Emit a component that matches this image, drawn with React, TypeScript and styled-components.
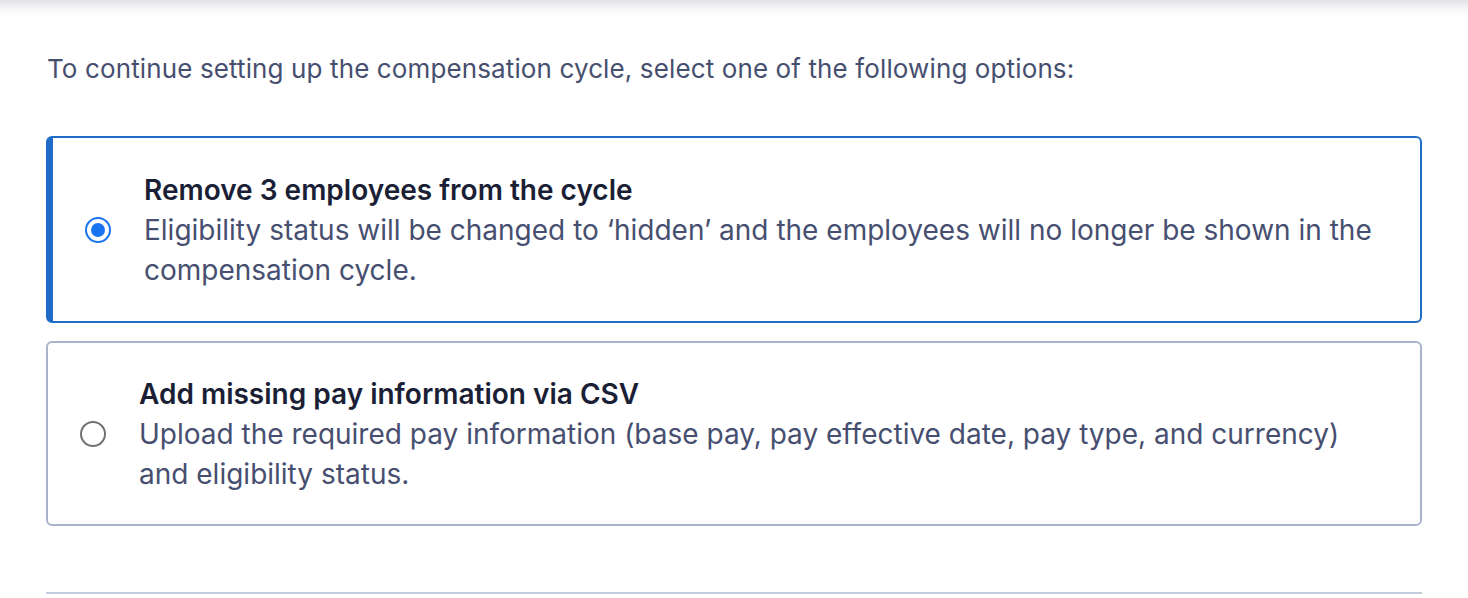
import React, { useState } from "react";
import styled, { createGlobalStyle } from "styled-components";

const GlobalStyle = createGlobalStyle`
  html, body { margin: 0; padding: 0; background: #ffffff; }
  body { font-family: Inter, "Noto Sans", sans-serif; -webkit-font-smoothing: antialiased; }
  * { box-sizing: border-box; }
`;

const Page = styled.div`
  position: relative;
  width: 1468px;
  height: 598px;
  overflow: hidden;
  background: #ffffff;
`;

const TopShadow = styled.div`
  height: 16px;
  margin-bottom: -16px;
  background: linear-gradient(to bottom, rgba(40, 44, 70, 0.14), rgba(40, 44, 70, 0.05) 50%, rgba(40, 44, 70, 0));
`;

const Content = styled.div`
  padding: 49px 46px 0 46px;
  display: flex;
  flex-direction: column;
`;

const Intro = styled.p`
  margin: 0 0 47px 0;
  font-size: 26px;
  line-height: 40px;
  letter-spacing: 0.12px;
  color: #474f70;
  padding-left: 1px;
`;

const Options = styled.div`
  display: flex;
  flex-direction: column;
  gap: 18px;
`;

const Card = styled.label<{ $selected: boolean }>`
  display: flex;
  align-items: center;
  gap: 33px;
  padding: ${(p) => (p.$selected ? "32px 32px 31px" : "31px 32px 30px")};
  border-radius: 6px;
  border: 2px solid ${(p) => (p.$selected ? "#1f6cc7" : "#a8b3cc")};
  border-left-width: ${(p) => (p.$selected ? "7px" : "2px")};
  cursor: pointer;
  background: #ffffff;
`;

const Radio = styled.span<{ $checked: boolean }>`
  flex: 0 0 auto;
  width: 26px;
  height: 26px;
  border-radius: 50%;
  border: 2px solid ${(p) => (p.$checked ? "#1a73f0" : "#717171")};
  display: flex;
  align-items: center;
  justify-content: center;
  &::after {
    content: "";
    width: 14px;
    height: 14px;
    border-radius: 50%;
    background: #1a73f0;
    display: ${(p) => (p.$checked ? "block" : "none")};
  }
`;

const HiddenInput = styled.input`
  position: absolute;
  opacity: 0;
  pointer-events: none;
`;

const Text = styled.div`
  display: flex;
  flex-direction: column;
`;

const Title = styled.div`
  font-size: 28px;
  line-height: 40px;
  font-weight: 600;
  color: #1b1f36;
`;

const Desc = styled.div`
  font-size: 28px;
  line-height: 40px;
  color: #474f70;
`;

const Divider = styled.hr`
  margin: 66px 0 0 0;
  border: none;
  height: 2px;
  background: #c3cbde;
`;

const options = [
  {
    id: "remove",
    title: "Remove 3 employees from the cycle",
    desc: "Eligibility status will be changed to \u2018hidden\u2019 and the employees will no longer be shown in the compensation cycle.",
  },
  {
    id: "csv",
    title: "Add missing pay information via CSV",
    desc: "Upload the required pay information (base pay, pay effective date, pay type, and currency) and eligibility status.",
  },
];

export default function App() {
  const [selected, setSelected] = useState("remove");
  return (
    <>
      <GlobalStyle />
      <Page>
        <TopShadow />
        <Content>
          <Intro>To continue setting up the compensation cycle, select one of the following options:</Intro>
          <Options>
            {options.map((o) => (
              <Card key={o.id} $selected={selected === o.id}>
                <HiddenInput
                  type="radio"
                  name="option"
                  checked={selected === o.id}
                  onChange={() => setSelected(o.id)}
                />
                <Radio $checked={selected === o.id} />
                <Text>
                  <Title>{o.title}</Title>
                  <Desc>{o.desc}</Desc>
                </Text>
              </Card>
            ))}
          </Options>
          <Divider />
        </Content>
      </Page>
    </>
  );
}
